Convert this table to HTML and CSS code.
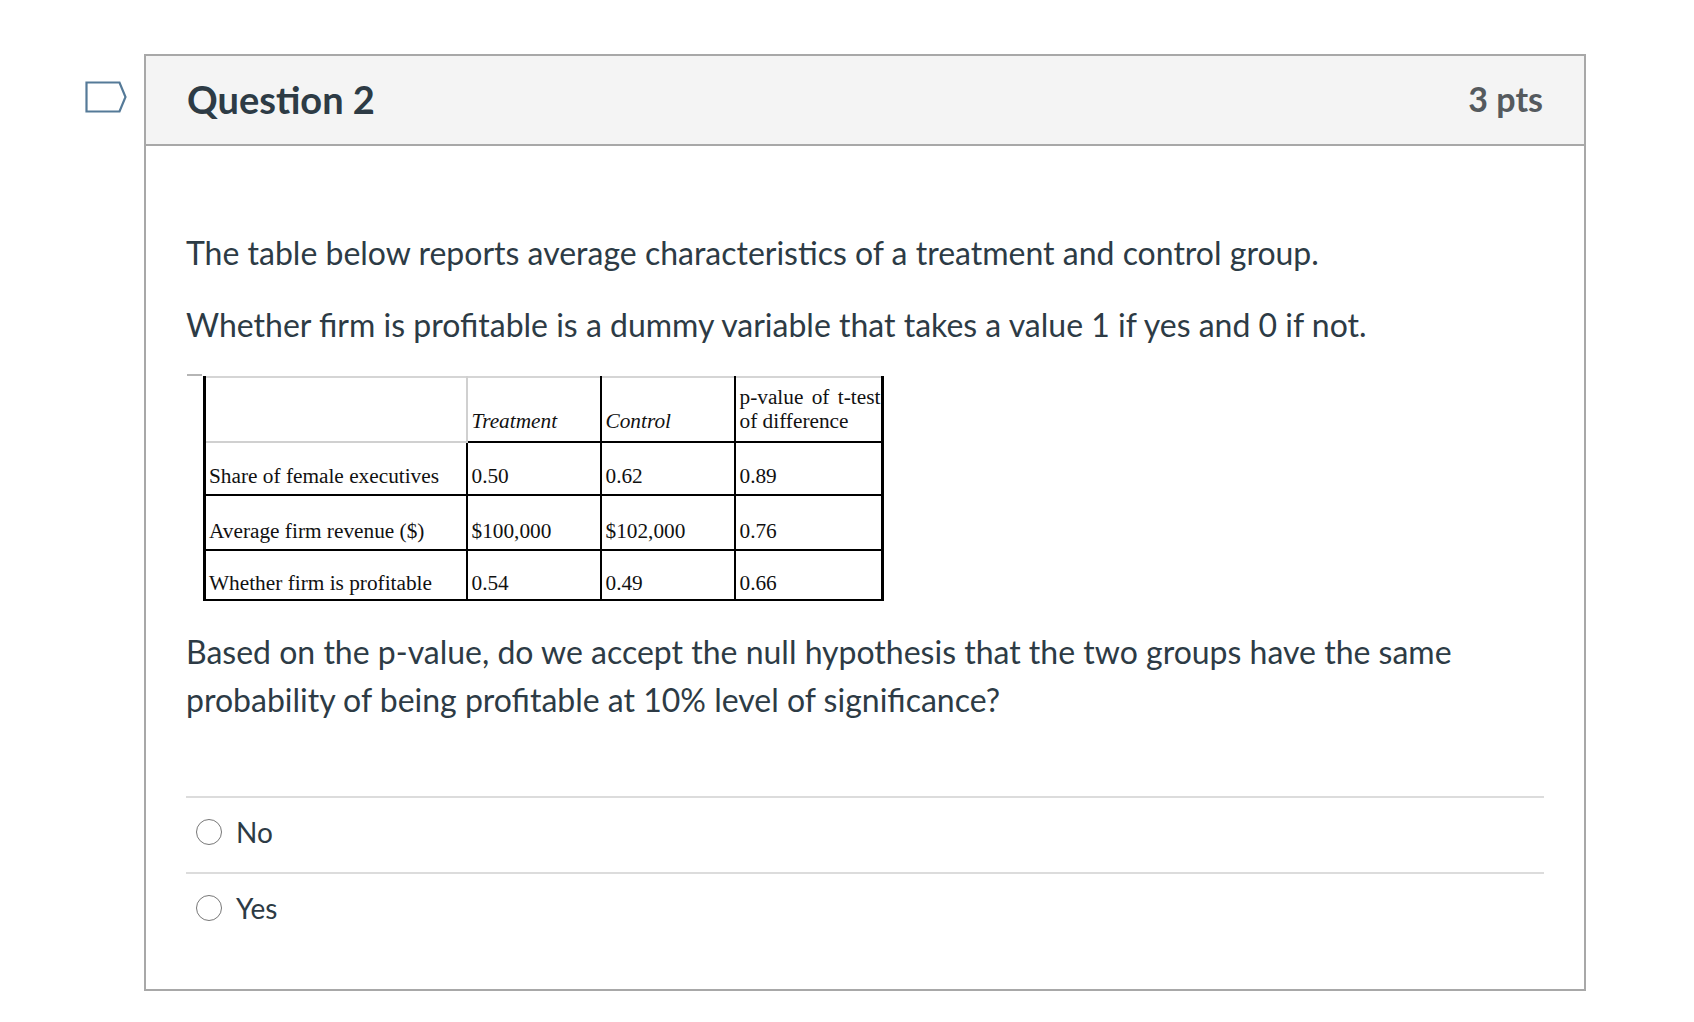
FILE: index.html
```html
<!DOCTYPE html>
<html lang="en">
<head>
<meta charset="utf-8">
<title>Question 2</title>
<link rel="stylesheet" href="styles.css">
</head>
<body>
<div class="page">
  <div class="flag">
    <svg width="42" height="32" viewBox="0 0 42 32" aria-hidden="true">
      <path d="M1.5 1.5 H34.5 L40.5 16 L34.5 30.5 H1.5 Z" fill="#fff" stroke="#557a98" stroke-width="2.2" stroke-linejoin="miter"/>
    </svg>
  </div>
  <div class="question">
    <div class="q-header">
      <h2 class="q-name">Question 2</h2>
      <span class="q-points">3 pts</span>
    </div>
    <div class="q-body">
      <p class="q-text">The table below reports average characteristics of a treatment and control group.</p>
      <p class="q-text">Whether firm is profitable is a dummy variable that takes a value 1 if yes and 0 if not.</p>
      <div class="table-wrap">
        <table class="data">
          <colgroup>
            <col class="c1"><col class="c2"><col class="c3"><col class="c4">
          </colgroup>
          <tr class="head">
            <td class="blank"></td>
            <td class="hcell first"><em>Treatment</em></td>
            <td class="hcell"><em>Control</em></td>
            <td class="hcell last"><span class="pv">p-value of t-test</span><br>of difference</td>
          </tr>
          <tr class="r1">
            <td class="label">Share of female executives</td>
            <td>0.50</td>
            <td>0.62</td>
            <td class="last">0.89</td>
          </tr>
          <tr class="r2">
            <td class="label">Average firm revenue ($)</td>
            <td>$100,000</td>
            <td>$102,000</td>
            <td class="last">0.76</td>
          </tr>
          <tr class="r3">
            <td class="label">Whether firm is profitable</td>
            <td>0.54</td>
            <td>0.49</td>
            <td class="last">0.66</td>
          </tr>
        </table>
      </div>
      <p class="q-text q-ask">Based on the p-value, do we accept the null hypothesis that the two groups have the same probability of being profitable at 10% level of significance?</p>
      <div class="answers">
        <label class="answer"><span class="radio"></span><span class="answer-label">No</span></label>
        <label class="answer"><span class="radio"></span><span class="answer-label">Yes</span></label>
      </div>
    </div>
  </div>
</div>
</body>
</html>
```

FILE: styles.css
```css
html, body {
  margin: 0;
  padding: 0;
  background: #fff;
}
body {
  font-family: Lato, "Open Sans", sans-serif;
  color: #2d3b45;
}
.page {
  display: flex;
  align-items: flex-start;
  padding: 54px 0 0 85px;
}
.flag {
  width: 59px;
  padding-top: 27px;
  display: flex;
}
.flag svg {
  display: block;
}
.question {
  width: 1438px;
  border: 2px solid #a8a8a8;
}
.q-header {
  display: flex;
  align-items: center;
  justify-content: space-between;
  height: 88px;
  padding: 0 41px 0 41px;
  background: #f4f4f4;
  border-bottom: 2px solid #a8a8a8;
}
.q-name {
  margin: 0;
  font-size: 38px;
  font-weight: 700;
  line-height: 46px;
  color: #2d3b45;
  padding-bottom: 2px;
}
.q-points {
  font-size: 34px;
  font-weight: 700;
  line-height: 46px;
  color: #555a5e;
  padding-bottom: 2px;
}
.q-body {
  padding: 83px 40px 41px 40px;
}
.q-text {
  margin: 0 0 24px 0;
  font-size: 32px;
  line-height: 48px;
}
.table-wrap {
  position: relative;
  padding: 3px 0 27px 17px;
}
.table-wrap::before {
  content: "";
  position: absolute;
  left: 1px;
  top: 1px;
  width: 15px;
  height: 2px;
  background: #b5b5b5;
}
.data {
  border-collapse: collapse;
  font-family: "Liberation Serif", "Times New Roman", serif;
  font-size: 21.3px;
  line-height: 24px;
  color: #111;
  border-left: 3px solid #000;
  border-right: 3px solid #000;
  border-bottom: 2px solid #000;
}
.c1 { width: 262px; }
.c2 { width: 134px; }
.c3 { width: 134px; }
.c4 { width: 144px; }
.data td {
  padding: 0 4px 6px 4px;
  vertical-align: bottom;
  border: 2px solid #000;
  white-space: nowrap;
}
.data tr.head td {
  border-top: 2px solid #d5d5d5;
  padding-bottom: 8px;
}
.data tr.head td.blank {
  border-bottom: 2px solid #d0d0d0;
  border-right: 2px solid #d0d0d0;
  border-left: 3px solid #000;
}
.data td.label {
  border-left: 3px solid #000;
  padding-left: 3px;
}
.data td.last {
  border-right: 3px solid #000;
  padding-right: 1px;
}
.data tr.head td.hcell {
  border-bottom: 2px solid #000;
}
.data tr.head td.first {
  border-left: 2px solid #d0d0d0;
}
.pv {
  word-spacing: 3px;
}
.data tr.head { height: 65px; }
.data tr.r1 { height: 53px; }
.data tr.r2 { height: 55px; }
.data tr.r3 { height: 50px; }
.data tr.r3 td { padding-bottom: 4px; }
.q-ask {
  margin-bottom: 72px;
}
.answers {
  display: flex;
  flex-direction: column;
}
.answer {
  display: flex;
  align-items: center;
  border-top: 2px solid #dcdcdc;
  padding: 10px 0 16px 10px;
  font-size: 28px;
  line-height: 48px;
}
.radio {
  width: 24px;
  height: 24px;
  border: 1.5px solid #777;
  border-radius: 50%;
  margin-right: 14px;
  margin-top: -1px;
  flex: none;
}
```
